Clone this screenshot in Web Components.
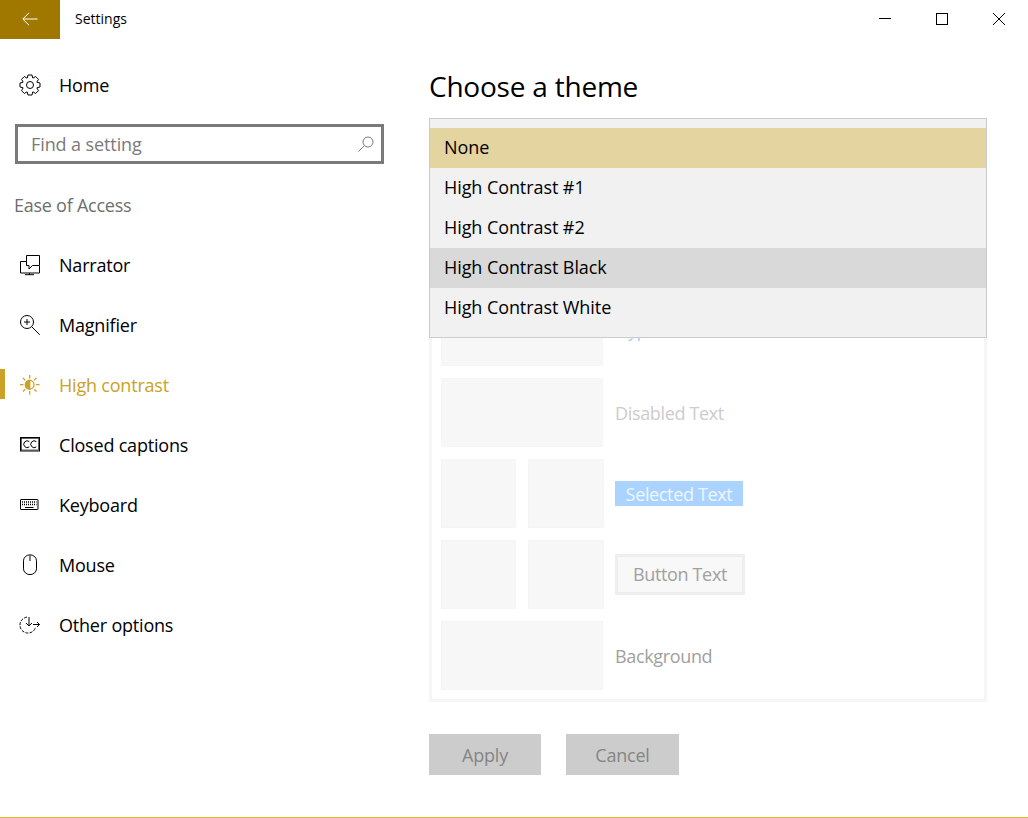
<!DOCTYPE html>
<html lang="en">
<head>
<meta charset="UTF-8">
<title>Settings</title>
<style>
  html, body { margin: 0; padding: 0; background: #fff; }
  body { font-family: "Open Sans", "Noto Sans", sans-serif; color: #000; }
</style>
</head>
<body>
<settings-app></settings-app>

<script>
// shared icon drawings, 20x20 box
function gearPath() {
  const pts = [];
  const n = 8, cx = 10, cy = 10;
  for (let i = 0; i < n; i++) {
    const a = i * Math.PI * 2 / n - Math.PI / 2;
    const w = Math.PI / n;
    [[7.5, -w * 0.95], [10.2, -w * 0.5], [10.2, w * 0.5], [7.5, w * 0.95]].forEach(([r, d]) => {
      pts.push((cx + r * Math.cos(a + d)).toFixed(2) + ' ' + (cy + r * Math.sin(a + d)).toFixed(2));
    });
  }
  return 'M' + pts.join('L') + 'Z';
}

const ICONS = {
  home: `<path d="${gearPath()}"/><circle cx="10" cy="10" r="3.5"/>`,
  narrator: `<path d="M6 6.500H.5V18h19v-7"/><path d="M6.500.5h13v10h-7l-3.500 3.500v-3.500H6.500z"/><path d="M9.500 18v2M5 19.700h9"/>`,
  magnifier: `<circle cx="7" cy="7" r="6.5"/><path d="M4 7h6M7 4v6M11.800 11.800l8 8"/>`,
  contrast: `<g stroke-width="1.300"><circle cx="9.700" cy="9.700" r="4.300"/><path d="M9.700 5.400a4.300 4.300 0 0 0 0 8.600z" fill="currentColor"/><path d="M9.700 0v3.500M9.700 16v3.500M0 9.700h3.500M16 9.700h3.500M2.900 2.900l2.300 2.300M14.200 14.200l2.300 2.300M2.900 16.500l2.300-2.300M14.200 5.200l2.300-2.300"/></g>`,
  captions: `<rect x=".5" y="2.500" width="19" height="13.500"/><rect x="1.500" y="3.500" width="17" height="11.500" stroke-width=".6"/><path d="M9.300 6.600a3.400 3.400 0 1 0 0 5.300M16.300 6.600a3.400 3.400 0 1 0 0 5.300"/>`,
  keyboard: `<rect x=".5" y="4.500" width="17.500" height="10" rx=".5"/><path d="M2 7h14.500M2 9.500h14.500" stroke-dasharray="1 1" stroke-width="1.400"/><path d="M5 12.500h8.500"/>`,
  mouse: `<path d="M3.500 6a6 5.500 0 0 1 13 0v8a6.500 5.800 0 0 1-13 0z" transform="translate(0 -.2)"/><path d="M10 .5v5.500"/>`,
  options: `<path d="M7 2.100A8 8 0 1 0 15.700 12" stroke-dasharray="3 1.300"/><path d="M9 2v9M6 8l3 3 3-3M13 9.500h6.500M17 7l2.500 2.500L17 12"/>`
};

class TitleBar extends HTMLElement {
  constructor() {
    super();
    this.attachShadow({ mode: 'open' }).innerHTML = `
      <style>
        :host { display: flex; align-items: center; height: 39px; font-size: 14px; }
        .back { width: 60px; height: 39px; background: #a07800; display: flex; align-items: center; justify-content: center; }
        .name { margin-left: 15px; flex: 1; padding-bottom: 2px; }
        .btns { display: flex; padding-right: 23px; gap: 45px; padding-bottom: 1px; }
        svg { display: block; fill: none; stroke: currentColor; }
      </style>
      <div class="back">
        <svg width="16" height="14" viewBox="0 0 16 14" style="stroke:#fff;margin-bottom:1px"><path d="M15.500 7H1M7 .8L.8 7 7 13.200"/></svg>
      </div>
      <span class="name"><slot></slot></span>
      <div class="btns">
        <svg width="12" height="12" viewBox="0 0 12 12"><path d="M0 5.500h12"/></svg>
        <svg width="12" height="12" viewBox="0 0 12 12"><rect x=".5" y=".5" width="11" height="11"/></svg>
        <svg width="12" height="12" viewBox="0 0 12 12"><path d="M0 0l12 12M12 0L0 12"/></svg>
      </div>`;
  }
}

class NavItem extends HTMLElement {
  constructor() {
    super();
    const active = this.hasAttribute('active');
    this.attachShadow({ mode: 'open' }).innerHTML = `
      <style>
        :host { display: flex; align-items: center; position: relative; height: 60px; padding-left: 20px; font-size: 18px; letter-spacing: -.2px; color: ${active ? '#c9a227' : '#000'}; }
        .bar { position: absolute; left: 0; top: 14px; width: 5px; height: 30px; background: #c9a227; }
        svg { width: 20px; height: 20px; margin-right: 19px; fill: none; stroke: currentColor; stroke-width: 1; flex: none; overflow: visible; }
        span { padding-bottom: 1px; }
      </style>
      ${active ? '<div class="bar"></div>' : ''}
      <svg viewBox="0 0 20 20">${ICONS[this.getAttribute('icon')] || ''}</svg>
      <span><slot></slot></span>`;
  }
}

class SearchBox extends HTMLElement {
  constructor() {
    super();
    this.attachShadow({ mode: 'open' }).innerHTML = `
      <style>
        :host { display: flex; align-items: center; box-sizing: border-box; width: 369px; height: 40px; margin: 9px 0 0 15px; border: 3px solid #7a7a7a; padding: 0 7px 0 13px; font-size: 18px; letter-spacing: -.1px; color: #7a7a7a; }
        span { flex: 1; }
        svg { display: block; fill: none; stroke: #7a7a7a; }
      </style>
      <span><slot></slot></span>
      <svg width="16" height="16" viewBox="0 0 16 16"><circle cx="10" cy="6" r="5"/><path d="M6.500 9.500L.5 15.500"/></svg>`;
  }
}

class ThemeMenu extends HTMLElement {
  constructor() {
    super();
    this.attachShadow({ mode: 'open' }).innerHTML = `
      <style>
        :host { position: absolute; left: 0; top: 79px; box-sizing: border-box; width: 558px; height: 220px; padding: 9px 0; background: #f1f1f1; border: 1px solid #ccc; }
      </style>
      <slot></slot>`;
  }
}

class ThemeOption extends HTMLElement {
  constructor() {
    super();
    this.attachShadow({ mode: 'open' }).innerHTML = `
      <style>
        :host { display: flex; align-items: center; box-sizing: border-box; height: 40px; padding: 0 0 2px 14px; font-size: 18px; letter-spacing: -.08px; color: #000; }
        :host([selected]) { background: #e3d4a0; }
        :host([hover]) { background: #d9d9d9; }
      </style>
      <slot></slot>`;
  }
}

class PreviewRow extends HTMLElement {
  constructor() {
    super();
    const split = this.hasAttribute('split');
    this.attachShadow({ mode: 'open' }).innerHTML = `
      <style>
        :host { display: flex; align-items: center; height: 69px; font-size: 18px; letter-spacing: -.35px; }
        .swatches { display: flex; gap: 12px; width: 163px; margin-right: 11px; height: 100%; flex: none; }
        .sw { box-sizing: border-box; background: #f7f7f7; border: 1px solid #f5f5f5; height: 100%; width: 75px; }
        .sw + .sw { width: 76px; }
        .full { width: 162px; }
      </style>
      <div class="swatches">
        ${split ? '<div class="sw"></div><div class="sw"></div>' : '<div class="sw full"></div>'}
      </div>
      <slot></slot>`;
  }
}

class ThemePreview extends HTMLElement {
  constructor() {
    super();
    this.attachShadow({ mode: 'open' }).innerHTML = `
      <style>
        :host { display: flex; flex-direction: column; gap: 12px; box-sizing: border-box; width: 558px; margin-top: 97px; padding: 9px; border: 3px solid #f5f5f5; }
      </style>
      <slot></slot>`;
  }
}

class FlatButton extends HTMLElement {
  constructor() {
    super();
    this.attachShadow({ mode: 'open' }).innerHTML = `
      <style>
        :host { display: flex; align-items: center; justify-content: center; height: 41px; width: var(--w, 112px); background: #ccc; color: #858585; font-size: 18px; letter-spacing: -.2px; }
      </style>
      <slot></slot>`;
  }
}

class SettingsApp extends HTMLElement {
  constructor() {
    super();
    this.attachShadow({ mode: 'open' }).innerHTML = `
      <style>
        :host { display: block; box-sizing: border-box; height: 818px; border-bottom: 1px solid #e6b82e; overflow: hidden; }
        .body { display: flex; }
        .side { width: 429px; flex: none; padding-top: 16px; }
        .group { height: 71px; box-sizing: border-box; padding: 28px 0 0 14px; font-size: 18px; line-height: 26px; letter-spacing: -.25px; color: #6e6e6e; }
        .main { position: relative; width: 558px; }
        h1 { margin: 0; padding-top: 27px; height: 41px; font-weight: 400; font-size: 28px; line-height: 40px; letter-spacing: -.22px; }
        .text { color: #000; }
        .link { color: #a8cdf5; padding-bottom: 3px; }
        .off { color: #ccc; }
        .sel { background: #aad4ff; color: #eef6ff; padding: 0 10px; height: 25px; line-height: 27px; width: 108px; text-align: center; }
        .btn { box-sizing: border-box; width: 130px; height: 41px; line-height: 35px; border: 3px solid #eee; background: #f8f8f8; color: #a0a0a0; text-align: center; }
        .bg { color: #a0a0a0; }
        .actions { display: flex; gap: 25px; margin-top: 32px; }
      </style>
      <title-bar>Settings</title-bar>
      <div class="body">
        <div class="side">
          <nav-item icon="home">Home</nav-item>
          <search-box>Find a setting</search-box>
          <div class="group">Ease of Access</div>
          <nav-item icon="narrator">Narrator</nav-item>
          <nav-item icon="magnifier">Magnifier</nav-item>
          <nav-item icon="contrast" active>High contrast</nav-item>
          <nav-item icon="captions">Closed captions</nav-item>
          <nav-item icon="keyboard">Keyboard</nav-item>
          <nav-item icon="mouse">Mouse</nav-item>
          <nav-item icon="options">Other options</nav-item>
        </div>
        <div class="main">
          <h1>Choose a theme</h1>
          <theme-preview>
            <preview-row><span class="text">Text</span></preview-row>
            <preview-row><span class="link">Hyperlinks</span></preview-row>
            <preview-row><span class="off">Disabled Text</span></preview-row>
            <preview-row split><span class="sel">Selected Text</span></preview-row>
            <preview-row split><span class="btn">Button Text</span></preview-row>
            <preview-row><span class="bg">Background</span></preview-row>
          </theme-preview>
          <div class="actions">
            <flat-button>Apply</flat-button>
            <flat-button style="--w:113px">Cancel</flat-button>
          </div>
          <theme-menu>
            <theme-option selected>None</theme-option>
            <theme-option>High Contrast #1</theme-option>
            <theme-option>High Contrast #2</theme-option>
            <theme-option hover>High Contrast Black</theme-option>
            <theme-option>High Contrast White</theme-option>
          </theme-menu>
        </div>
      </div>`;
  }
}

customElements.define('title-bar', TitleBar);
customElements.define('nav-item', NavItem);
customElements.define('search-box', SearchBox);
customElements.define('theme-menu', ThemeMenu);
customElements.define('theme-option', ThemeOption);
customElements.define('preview-row', PreviewRow);
customElements.define('theme-preview', ThemePreview);
customElements.define('flat-button', FlatButton);
customElements.define('settings-app', SettingsApp);
</script>
</body>
</html>
